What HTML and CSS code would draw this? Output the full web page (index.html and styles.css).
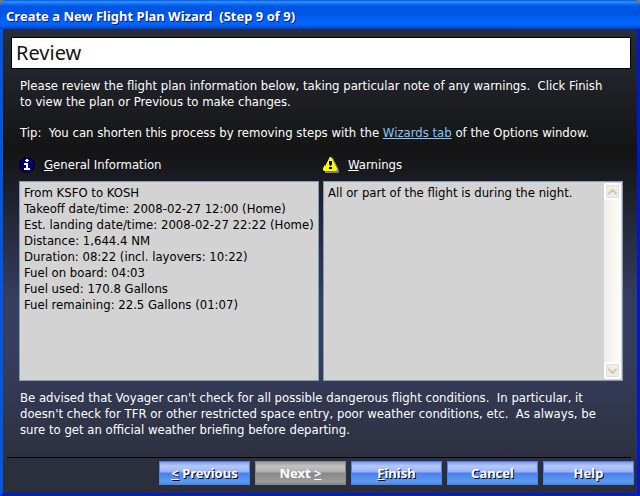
FILE: index.html
```html
<!DOCTYPE html>
<html lang="en">
<head>
  <meta charset="UTF-8" />
  <meta name="viewport" content="width=device-width, initial-scale=1.0" />
  <title>Create a New Flight Plan Wizard</title>
  <link rel="stylesheet" href="styles.css">
</head>
<body>
  <div class="window">
    <header class="titlebar">Create a New Flight Plan Wizard&nbsp; (Step 9 of 9)</header>

    <main class="content">
      <h1>Review</h1>

      <div class="text">
        <p>Please review the flight plan information below, taking particular note of any warnings.&nbsp; Click Finish<br>to view the plan or Previous to make changes.</p>
        <p>Tip:&nbsp; You can shorten this process by removing steps with the <a href="#wizards">Wizards tab</a> of the Options window.</p>
      </div>

      <div class="panels">
        <section class="panel">
          <div class="panel-head">
            <svg width="16" height="16" viewBox="0 0 16 16" aria-hidden="true">
              <circle cx="8" cy="8" r="7.5" fill="#00007b" stroke="#000"/>
              <path d="M7 2h2v1h1v1H9v1H7V4H6V3h1zM5 6h4v5h2v2H5v-2h2V8H5z" fill="#fff"/>
            </svg>
            <label for="info"><u>G</u>eneral Information</label>
          </div>
          <div class="box">
            <textarea id="info" readonly>From KSFO to KOSH
Takeoff date/time: 2008-02-27 12:00 (Home)
Est. landing date/time: 2008-02-27 22:22 (Home)
Distance: 1,644.4 NM
Duration: 08:22 (incl. layovers: 10:22)
Fuel on board: 04:03
Fuel used: 170.8 Gallons
Fuel remaining: 22.5 Gallons (01:07)</textarea>
          </div>
        </section>

        <section class="panel">
          <div class="panel-head">
            <svg width="16" height="16" viewBox="0 0 16 16" aria-hidden="true">
              <path d="M8 1h2l6 12v2l-1 1H2v-2z" fill="#808080"/>
              <path d="M7 0h1l1 1v1l1 1v1l1 1v1l1 1v1l1 1v1l1 1v2l-1 1H1l-1-1v-2l1-1v-1l1-1V9l1-1V7l1-1V5l1-1V3l1-1V1z" fill="#ff0"/>
              <path d="M6 4h3v3L8 9H7L6 7zM6 10h3v2H6z" fill="#000"/>
            </svg>
            <label for="warnings"><u>W</u>arnings</label>
          </div>
          <div class="box">
            <textarea id="warnings" readonly>All or part of the flight is during the night.</textarea>
            <div class="scrollbar">
              <button type="button" class="arrow" aria-label="Scroll up" disabled>
                <svg width="9" height="6" viewBox="0 0 9 6"><path d="M.5 5l4-4 4 4" fill="none" stroke="#c8c8bc" stroke-width="2"/></svg>
              </button>
              <button type="button" class="arrow" aria-label="Scroll down" disabled>
                <svg width="9" height="6" viewBox="0 0 9 6"><path d="M.5 1l4 4 4-4" fill="none" stroke="#c8c8bc" stroke-width="2"/></svg>
              </button>
            </div>
          </div>
        </section>
      </div>

      <p class="advice">Be advised that Voyager can't check for all possible dangerous flight conditions.&nbsp; In particular, it<br>doesn't check for TFR or other restricted space entry, poor weather conditions, etc.&nbsp; As always, be<br>sure to get an official weather briefing before departing.</p>
    </main>

    <footer class="buttons">
      <button type="button"><u>&lt;</u> Previous</button>
      <button type="button" disabled>Next <u>&gt;</u></button>
      <button type="button"><u>F</u>inish</button>
      <button type="button">Cancel</button>
      <button type="button">Help</button>
    </footer>
  </div>
</body>
</html>
```
FILE: styles.css
```css
* {
  box-sizing: border-box;
}
body {
  margin: 0;
  background: #7a7a70;
  font-family: "DejaVu Sans Condensed", "DejaVu Sans", sans-serif;
  font-size: 13px;
  line-height: 16px;
  color: #fff;
}
.window {
  display: flex;
  flex-direction: column;
  min-height: 100vh;
  border: 3px solid #0831d9;
  border-left-color: #0855dd;
  border-right-color: #0019cf;
  border-bottom-color: #001ec8;
  border-top: 0;
  border-radius: 7px 7px 0 0;
  background: linear-gradient(#292d39 29px, #141414 150px, #363e60 300px, #363d5c 360px, #2b2f3c 470px, #2b2f3c);
}
.titlebar {
  height: 29px;
  margin: 0 -3px;
  padding: 8px 6px 0;
  border-radius: 7px 7px 0 0;
  background: linear-gradient(#0058e6, #3a93ff 2px, #0a6cf5 4px, #0055e0 7px, #0055e5 14px, #0066ff 22px, #0062f8 25px, #0040c8);
  font-family: "Noto Sans", sans-serif;
  font-weight: bold;
  text-shadow: 1px 1px #0a1883;
}
.content {
  display: flex;
  flex-direction: column;
  flex: 1;
  margin: 0 6px 0 4px;
  padding-top: 8px;
  border-bottom: 1px solid #000;
}
h1 {
  margin: 0 0 0 4px;
  padding: 0 4px;
  border: 1px solid #000;
  background: #fff;
  color: #141414;
  font-family: "Noto Sans", sans-serif;
  font-size: 20px;
  font-weight: normal;
  line-height: 30px;
}
.text {
  padding: 9px 12px 0 13px;
}
p {
  margin: 0 0 15px;
}
a {
  color: #85c8f8;
}
.panels {
  display: flex;
  flex: 1;
  gap: 4px;
  padding: 1px 8px 0 12px;
}
.panel {
  display: flex;
  flex-direction: column;
  flex: 1;
  min-width: 0;
}
.panel-head {
  display: flex;
  align-items: center;
  gap: 9px;
  height: 24px;
  padding-bottom: 8px;
}
.box {
  display: flex;
  flex: 1;
  border: 1px solid #7f9db9;
  background: #d3d3d3;
}
textarea {
  flex: 1;
  min-width: 0;
  padding: 3px 0 0 4px;
  border: 0;
  outline: 0;
  resize: none;
  overflow: hidden;
  background: none;
  color: #000;
  font: inherit;
}
.scrollbar {
  display: flex;
  flex-direction: column;
  justify-content: space-between;
  width: 17px;
  margin: 1px;
  background: linear-gradient(to right, #eeede5, #fefefb);
}
.arrow {
  display: flex;
  align-items: center;
  justify-content: center;
  height: 17px;
  padding: 0;
  border: 2px solid #fff;
  border-radius: 3px;
  background: #eeeee6;
  box-shadow: inset 0 0 0 1px #e0e0d6;
}
.advice {
  margin: 9px 12px 19px 13px;
}
.buttons {
  display: flex;
  justify-content: flex-end;
  gap: 5px;
  padding: 3px 3px 8px;
}
.buttons button {
  width: 91px;
  height: 24px;
  padding: 0;
  border: 1px solid #5580e8;
  background: linear-gradient(#7f9ef5, #b5c8fb 4px, #98b1f8 10px, #4f7ee9 11px, #559ff0 20px, #4d86ea);
  color: #fff;
  font: bold 13px "Noto Sans", sans-serif;
  text-shadow: 1px 1px #000;
}
.buttons button:disabled {
  border-color: #8a8a8a;
  background: linear-gradient(#989898, #c2c2c2 4px, #aeaeae 10px, #888 11px, #9c9c9c 20px, #858585);
  text-shadow: none;
}
```
